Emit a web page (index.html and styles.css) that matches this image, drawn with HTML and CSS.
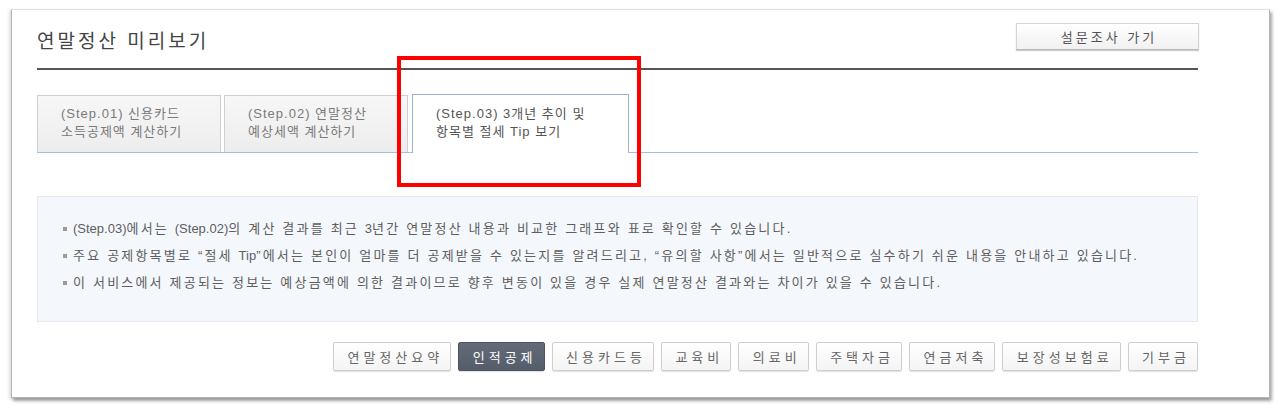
FILE: index.html
```html
<!DOCTYPE html>
<html lang="ko">
<head>
<meta charset="utf-8">
<title>연말정산 미리보기</title>
<link rel="stylesheet" href="styles.css">
</head>
<body>
<div class="panel">
  <div class="header">
    <h1 class="title">연말정산 미리보기</h1>
    <button class="survey-btn">설문조사 가기</button>
  </div>
  <div class="tabs">
    <div class="tab tab-1">(Step.01) 신용카드<br>소득공제액 계산하기</div>
    <div class="tab tab-2">(Step.02) 연말정산<br>예상세액 계산하기</div>
    <div class="tab tab-3 active">(Step.03) 3개년 추이 및<br>항목별 절세 Tip 보기</div>
    <div class="highlight"></div>
  </div>
  <div class="info">
    <ul class="info-list">
      <li><span class="lat">(Step.03)</span>에서는 <span class="lat">(Step.02)</span>의 계산 결과를 최근 <span class="lat">3</span>년간 연말정산 내용과 비교한 그래프와 표로 확인할 수 있습니다.</li>
      <li>주요 공제항목별로 “절세 <span class="lat">Tip</span>”에서는 본인이 얼마를 더 공제받을 수 있는지를 알려드리고, “유의할 사항”에서는 일반적으로 실수하기 쉬운 내용을 안내하고 있습니다.</li>
      <li>이 서비스에서 제공되는 정보는 예상금액에 의한 결과이므로 향후 변동이 있을 경우 실제 연말정산 결과와는 차이가 있을 수 있습니다.</li>
    </ul>
  </div>
  <div class="cat-buttons">
    <button class="cat">연말정산요약</button>
    <button class="cat on">인적공제</button>
    <button class="cat">신용카드등</button>
    <button class="cat">교육비</button>
    <button class="cat">의료비</button>
    <button class="cat">주택자금</button>
    <button class="cat">연금저축</button>
    <button class="cat">보장성보험료</button>
    <button class="cat">기부금</button>
  </div>
</div>
</body>
</html>
```

FILE: styles.css
```css
* { box-sizing: border-box; }
html, body { margin: 0; padding: 0; background: #fff; }
body {
  font-family: "Liberation Sans", "Noto Sans CJK KR", sans-serif;
  color: #555;
  height: 412px;
  overflow: hidden;
}
.panel {
  margin: 9px 0 0 11px;
  width: 1259px;
  background: #fff;
  border: 1px solid #b5b5b5;
  border-top-color: #e2e2e2;
  box-shadow: 2px 3px 3px rgba(0,0,0,0.35), -2px 1px 3px rgba(0,0,0,0.12);
  padding: 0 71px 26px 25px;
}
.header {
  height: 60px;
  padding-top: 13px;
  border-bottom: 2px solid #555;
  display: flex;
  justify-content: space-between;
  align-items: flex-start;
}
.title {
  margin: 3px 0 0 0;
  font-family: "Noto Sans CJK KR", sans-serif;
  font-weight: normal;
  font-size: 19px;
  line-height: 28px;
  letter-spacing: 3px;
  color: #444;
}
.survey-btn {
  width: 183px;
  height: 27px;
  margin-right: -1px;
  border: 1px solid #d4d4d4;
  border-bottom-color: #bbb;
  background: linear-gradient(#ffffff, #f1f1f1);
  box-shadow: 0 1px 1px rgba(0,0,0,0.2);
  font-family: "Noto Sans CJK KR", sans-serif;
  font-size: 13px;
  letter-spacing: 3px;
  color: #555;
  padding: 0 0 0 3px;
}
.tabs {
  position: relative;
  margin-top: 24px;
  height: 59px;
  border-bottom: 1px solid #a9bedb;
  display: flex;
  align-items: flex-end;
}
.tab {
  height: 57px;
  padding: 9px 0 0 23px;
  border: 1px solid #cfcfcf;
  border-bottom: none;
  background: linear-gradient(#f7f7f7, #ededed);
  font-size: 13px;
  line-height: 18px;
  letter-spacing: 1px;
  color: #7a7a7a;
}
.tab-1 { width: 184px; }
.tab-2 { width: 184px; margin-left: 3px; }
.tab-3 { width: 217px; margin-left: 4px; }
.tab.active {
  height: 59px;
  margin-bottom: -1px;
  padding-top: 10px;
  background: #fff;
  border-color: #9ab2d6;
  color: #555;
}
.highlight {
  position: absolute;
  left: 360px;
  top: -38px;
  width: 244px;
  height: 131px;
  border: 4px solid #ff0000;
}
.info {
  margin-top: 43px;
  height: 126px;
  background: #f4f7fb;
  border: 1px solid #e4e9f0;
  padding: 18px 0 0 25px;
}
.info-list {
  list-style: none;
  margin: 0;
  padding: 0;
}
.info-list li {
  position: relative;
  padding-left: 10px;
  font-size: 13px;
  line-height: 27px;
  letter-spacing: 2.2px;
  color: #5e5e5e;
}
.info-list .lat { letter-spacing: 0; }
.info-list li::before {
  content: "";
  position: absolute;
  left: 0;
  top: 12px;
  width: 4px;
  height: 4px;
  background: #9a9a9a;
}
.cat-buttons {
  margin-top: 20px;
  display: flex;
  justify-content: flex-end;
  gap: 7px;
}
.cat {
  height: 29px;
  padding: 0 7px 0 13.5px;
  border: 1px solid #cfcfcf;
  background: linear-gradient(#ffffff, #f4f4f4);
  box-shadow: 0 1px 1px rgba(0,0,0,0.12);
  font-family: "Noto Sans CJK KR", sans-serif;
  font-size: 13px;
  letter-spacing: 4px;
  color: #666;
  border-radius: 2px;
}
.cat.on {
  background: linear-gradient(#636b78, #555d6a);
  border-color: #4c535e;
  color: #fff;
}
```
